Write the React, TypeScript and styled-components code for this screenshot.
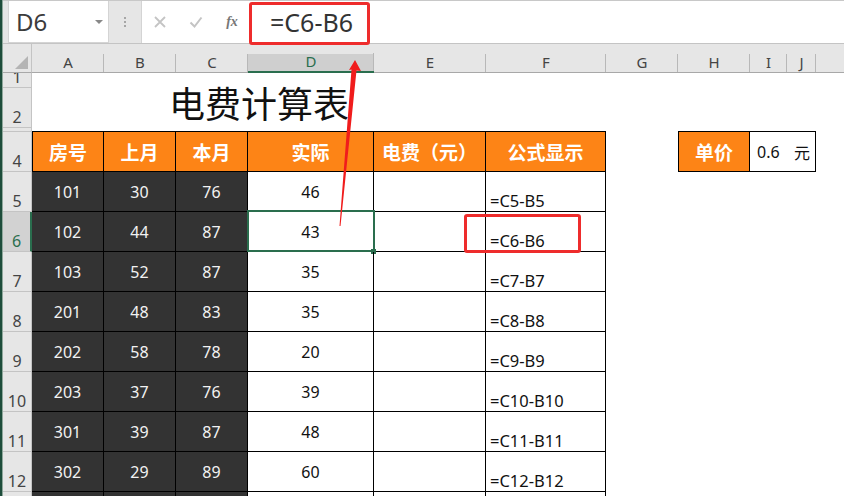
import React from "react";
import styled, { createGlobalStyle } from "styled-components";

const Global = createGlobalStyle`
  html, body { margin: 0; padding: 0; background: #fff; }
  body { font-family: "Noto Sans", "Noto Sans CJK SC", sans-serif; }
`;

const Window = styled.div`
  position: relative;
  width: 844px;
  height: 496px;
  overflow: hidden;
  display: flex;
  background: #fff;
`;
const Edge = styled.div`
  width: 3px;
  flex: none;
  background: linear-gradient(90deg, #1e4d3b 0 2px, #8fa89c 2px);
`;
const Main = styled.div`
  flex: 1;
  min-width: 0;
  display: flex;
  flex-direction: column;
`;
const FormulaBar = styled.div`
  height: 44px;
  flex: none;
  display: flex;
  align-items: flex-start;
  background: #e6e6e6;
  padding-left: 5px;
  border-top: 1px solid #c8c8c8;
  border-bottom: 1px solid #c4c4c4;
  box-sizing: border-box;
`;
const NameBox = styled.div`
  width: 101px;
  height: 42px;
  box-sizing: border-box;
  background: #fff;
  border: 1px solid #d4d4d4;
  border-top: none;
  display: flex;
  align-items: center;
  justify-content: space-between;
  padding: 0 5px 0 7px;
  font-size: 24px;
  color: #3c3c3c;
`;
const Caret = styled.span`
  width: 0;
  height: 0;
  border-left: 4px solid transparent;
  border-right: 4px solid transparent;
  border-top: 4px solid #888;
`;
const Grip = styled.div`
  width: 32px;
  height: 42px;
  display: flex;
  flex-direction: column;
  align-items: center;
  justify-content: center;
  gap: 2px;
  span { width: 2px; height: 2px; background: #a6a6a6; }
`;
const FormulaBox = styled.div`
  flex: 1;
  height: 42px;
  box-sizing: border-box;
  background: #fff;
  border-left: 1px solid #d4d4d4;
  display: flex;
  align-items: center;
`;
const BarIcon = styled.span<{ $tone: string }>`
  width: 36px;
  display: flex;
  justify-content: center;
  align-items: center;
  color: ${(p) => p.$tone};
`;
const Fx = styled.span`
  font-family: "Liberation Serif", serif;
  font-style: italic;
  font-weight: 700;
  font-size: 14px;
  color: #777;
  width: 36px;
  text-align: center;
`;
const Formula = styled.span`
  font-size: 25px;
  color: #333;
  margin-left: 20px;
`;

const Sheet = styled.div`
  flex: 1;
  min-height: 0;
  display: grid;
  grid-template-columns: 29px 72px 72px 72px 126px 112px 120px 72px 72px 37px 29px 1fr;
  grid-template-rows: 29px 15px 40px 4px repeat(10, 40px);
`;
const Corner = styled.div`
  background: #e6e6e6;
  border-right: 1px solid #c4c4c4;
  border-bottom: 1px solid #a8a8a8;
  box-sizing: border-box;
  display: flex;
  align-items: flex-end;
  justify-content: flex-end;
  padding: 0 3px 3px 0;
`;
const Triangle = styled.span`
  width: 0;
  height: 0;
  border-left: 13px solid transparent;
  border-bottom: 13px solid #b4b4b4;
`;
const ColHead = styled.div<{ $on?: boolean; $last?: boolean }>`
  box-sizing: border-box;
  background: ${(p) => (p.$on ? "linear-gradient(#e6e6e6 0 10px, #cfcfcf 10px)" : "#e6e6e6")};
  border-bottom: ${(p) => (p.$on ? "2px solid #2a6e4e" : "1px solid #a8a8a8")};
  color: ${(p) => (p.$on ? "#2a6e4e" : "#444")};
  font-size: 15px;
  display: flex;
  align-items: flex-end;
  justify-content: center;
  line-height: 19px;
  position: relative;
  &::after {
    content: ${(p) => (p.$last ? "none" : '""')};
    position: absolute;
    right: 0;
    bottom: 0;
    height: 18px;
    width: 1px;
    background: #b8b8b8;
  }
`;
const RowHead = styled.div<{ $on?: boolean }>`
  grid-column: 1;
  box-sizing: border-box;
  background: ${(p) => (p.$on ? "#d2d2d2" : "#e6e6e6")};
  border-bottom: 1px solid #c4c4c4;
  border-right: ${(p) => (p.$on ? "2px solid #2a6e4e" : "1px solid #c4c4c4")};
  color: ${(p) => (p.$on ? "#2a6e4e" : "#444")};
  font-size: 16px;
  line-height: 20px;
  display: flex;
  align-items: flex-end;
  justify-content: center;
  overflow: hidden;
`;
const Blank = styled.div<{ $span?: number }>`
  grid-column: span ${(p) => p.$span ?? 1};
  background: #fff;
`;
const TitleCell = styled.div`
  grid-column: 2 / -1;
  grid-row: 3;
  padding-left: 137px;
  font-size: 36px;
  color: #111;
  line-height: 34px;
  white-space: nowrap;
`;
const Cell = styled.div<{ $first?: boolean }>`
  box-sizing: border-box;
  border-right: 1px solid #000;
  border-bottom: 1px solid #000;
  border-left: ${(p) => (p.$first ? "1px solid #000" : "none")};
  display: flex;
  align-items: center;
  justify-content: center;
  font-size: 16px;
`;
const Head = styled(Cell)<{ $cjkParens?: boolean }>`
  background: #fd8416;
  color: #fff;
  font-weight: 700;
  font-size: 19px;
  border-top: 1px solid #000;
  margin-top: -1px;
  height: 41px;
  font-family: ${(p) => (p.$cjkParens ? '"Noto Sans CJK TC", sans-serif' : "inherit")};
`;
const Dark = styled(Cell)`
  background: #333;
  color: #f2f2f2;
`;
const Value = styled(Cell)<{ $sel?: boolean }>`
  position: relative;
  color: #111;
  &::before {
    content: ${(p) => (p.$sel ? '""' : "none")};
    position: absolute;
    inset: -2px -2px -1px -1px;
    border: 2px solid #2a6e4e;
  }
  &::after {
    content: ${(p) => (p.$sel ? '""' : "none")};
    position: absolute;
    right: -3px;
    bottom: -3px;
    width: 5px;
    height: 5px;
    background: #2a6e4e;
  }
`;
const Formulaic = styled(Cell)`
  align-items: flex-end;
  justify-content: flex-start;
  padding-left: 4px;
  font-size: 16.5px;
  line-height: 20px;
  color: #111;
`;
const PriceValue = styled(Cell)`
  color: #111;
  border-top: 1px solid #000;
  margin-top: -1px;
  height: 41px;
  grid-column: span 2;
  justify-content: space-between;
  padding: 0 5px 0 7px;
`;
const RedBox = styled.div<{ $x: number; $y: number; $w: number; $h: number }>`
  position: absolute;
  left: ${(p) => p.$x}px;
  top: ${(p) => p.$y}px;
  width: ${(p) => p.$w}px;
  height: ${(p) => p.$h}px;
  box-sizing: border-box;
  border: 3px solid #ee2c2c;
  border-radius: 3px;
`;
const ArrowLayer = styled.svg`
  position: absolute;
  left: 0;
  top: 0;
  pointer-events: none;
`;

const rows: [string, number, number, number, number][] = [
  ["5", 101, 30, 76, 46],
  ["6", 102, 44, 87, 43],
  ["7", 103, 52, 87, 35],
  ["8", 201, 48, 83, 35],
  ["9", 202, 58, 78, 20],
  ["10", 203, 37, 76, 39],
  ["11", 301, 39, 87, 48],
  ["12", 302, 29, 89, 60],
  ["13", 0, 0, 0, 0],
];
const columns = ["A", "B", "C", "D", "E", "F", "G", "H", "I", "J", ""];
const heads = ["房号", "上月", "本月", "实际", "电费（元）", "公式显示"];

export default function App() {
  return (
    <Window>
      <Global />
      <Edge />
      <Main>
        <FormulaBar>
          <NameBox>
            D6
            <Caret />
          </NameBox>
          <Grip>
            <span />
            <span />
            <span />
          </Grip>
          <FormulaBox>
            <BarIcon $tone="#c4c4c4">
              <svg width="14" height="14" viewBox="0 0 14 14" fill="none" stroke="currentColor" strokeWidth="1.8">
                <path d="M2 2l10 10M12 2L2 12" />
              </svg>
            </BarIcon>
            <BarIcon $tone="#c4c4c4">
              <svg width="14" height="14" viewBox="0 0 14 14" fill="none" stroke="currentColor" strokeWidth="2">
                <path d="M1.5 7.5l4 4 7-9" />
              </svg>
            </BarIcon>
            <Fx>fx</Fx>
            <Formula>=C6-B6</Formula>
          </FormulaBox>
        </FormulaBar>
        <Sheet>
          <Corner>
            <Triangle />
          </Corner>
          {columns.map((c, i) => (
            <ColHead key={i} $on={c === "D"} $last={c === ""}>
              {c}
            </ColHead>
          ))}

          <RowHead>1</RowHead>
          <TitleCell>电费计算表</TitleCell>
          <RowHead>2</RowHead>
          <RowHead>&nbsp;</RowHead>

          <RowHead>4</RowHead>
          {heads.map((h, i) => (
            <Head key={h} $first={i === 0} $cjkParens={i === 4}>
              {h}
            </Head>
          ))}
          <Blank />
          <Head $first>单价</Head>
          <PriceValue>
            <span>0.6</span>
            <span>元</span>
          </PriceValue>
          <Blank />

          {rows.map(([n, a, b, c, d]) => (
            <React.Fragment key={n}>
              <RowHead $on={n === "6"}>{n}</RowHead>
              <Dark>{a || ""}</Dark>
              <Dark>{b || ""}</Dark>
              <Dark>{c || ""}</Dark>
              <Value $sel={n === "6"}>{d || ""}</Value>
              <Cell />
              <Formulaic>{a ? `=C${n}-B${n}` : ""}</Formulaic>
              <Blank $span={5} />
            </React.Fragment>
          ))}
        </Sheet>
      </Main>
      <RedBox $x={249} $y={2} $w={121} $h={43} />
      <RedBox $x={464} $y={214} $w={117} $h={39} />
      <ArrowLayer width="844" height="496" viewBox="0 0 844 496">
        <path d="M355 60L361 71L356.5 70.5L340.5 226L339.5 226L351.5 69.5L349 70Z" fill="#f01c1c" />
      </ArrowLayer>
    </Window>
  );
}
